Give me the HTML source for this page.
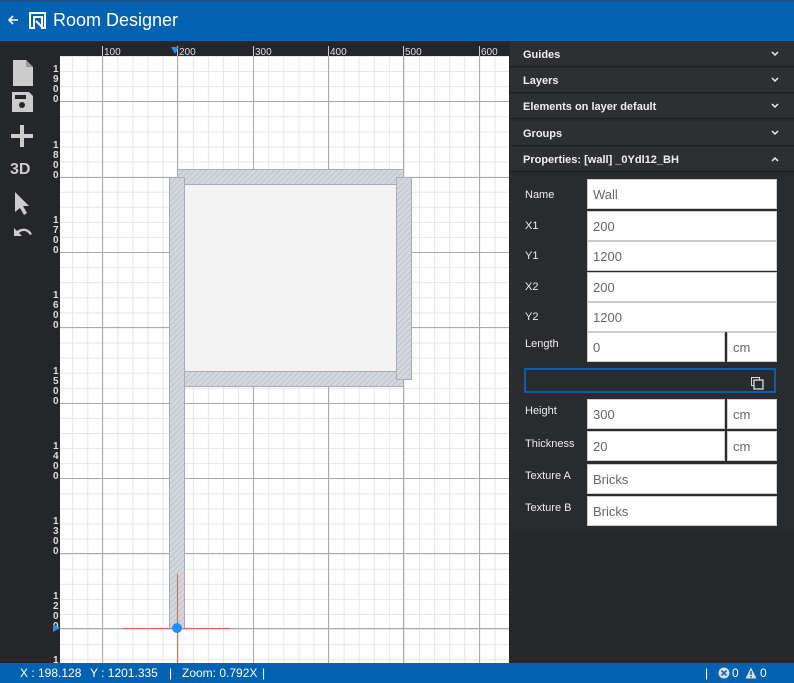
<!DOCTYPE html>
<html><head><meta charset="utf-8"><style>
*{margin:0;padding:0;box-sizing:border-box}
body{width:794px;height:683px;overflow:hidden;background:#252629;font-family:"Liberation Sans",sans-serif;position:relative}
.hdr{position:absolute;left:0;top:0;width:794px;height:41px;background:#0062b1;border-top:2px solid #1a4f86;color:#fff}
.hdr .t{position:absolute;left:53px;top:8px;font-size:18px}
.panel{position:absolute;left:510px;top:41px;width:284px;height:622px;background:#28292c}
.sec{position:absolute;left:0;width:284px;height:25px;background:#2e2f33;border-bottom:1px solid #1d1e20;color:#f0f0f0;font-size:11px;font-weight:bold;padding:7px 0 0 13px}
.sec svg{position:absolute;right:15px;top:9px}
.body{position:absolute;left:0;top:132px;width:284px;height:360px;background:#2a2b2e}
.lbl{position:absolute;left:525px;color:#eee;font-size:11px}
.in{position:absolute;background:#fff;border:1px solid #ccc;color:#666;font-size:13px;padding:7px 0 0 5px;height:30px}
.status{position:absolute;left:0;top:663px;width:794px;height:20px;background:#0062b1;color:#fff;font-size:12px}
.status span{position:absolute;top:3px}
</style></head><body>
<div class="hdr">
<svg style="position:absolute;left:7px;top:12px" width="12" height="12" viewBox="0 0 12 12"><path d="M11 6H2M6 2L2 6l4 4" stroke="#fff" stroke-width="1.6" fill="none"/></svg>
<svg style="position:absolute;left:28px;top:9px" width="19" height="19" viewBox="0 0 19 19"><path d="M2 17V2h15v15h-3V6H6v11z" fill="none" stroke="#fff" stroke-width="2"/><path d="M8 10l7 7" stroke="#fff" stroke-width="2"/></svg>
<div class="t">Room Designer</div>
</div>
<svg style="position:absolute;left:0;top:41px" width="510" height="622">
<rect width="510" height="622" fill="#252629"/>
<g fill="#ccc">
<path d="M13 19h13l7 7v19H13z"/><path d="M26 19v7h7" fill="#999"/>
<path d="M12 51h17l4 4v16H12z"/><circle cx="22" cy="64" r="3" fill="#252629"/><rect x="15" y="54" width="11" height="4" fill="#252629"/>
<rect x="11" y="93" width="22" height="4"/><rect x="20" y="84" width="4" height="22"/>
<text x="10" y="133" font-size="16" font-weight="bold" font-family="Liberation Sans">3D</text>
<path d="M15 151l0 20 5-4 4 7 3-2-4-7 6 0z"/>
<path d="M14 187v8h8l-3-3c3-3 8-3 11 2l2-1c-3-6-10-7-15-3z"/>
</g>
<g fill="#ddd" font-size="10" font-family="Liberation Sans">
<text x="104" y="14">100</text><text x="179" y="14">200</text><text x="255" y="14">300</text><text x="330" y="14">400</text><text x="405" y="14">500</text><text x="481" y="14">600</text>
</g>
<g stroke="#ccc"><path d="M102.5 5v10M177.5 5v10M253.5 5v10M328.5 5v10M403.5 5v10M479.5 5v10"/></g>
<path d="M171 6h8l-4 7z" fill="#1e90ff"/>
<g fill="#ddd" font-size="10" font-weight="bold" font-family="Liberation Sans">
<text x="53" y="31">1</text><text x="53" y="41">9</text><text x="53" y="51">0</text><text x="53" y="61">0</text>
<text x="53" y="107">1</text><text x="53" y="117">8</text><text x="53" y="127">0</text><text x="53" y="137">0</text>
<text x="53" y="182">1</text><text x="53" y="192">7</text><text x="53" y="202">0</text><text x="53" y="212">0</text>
<text x="53" y="257">1</text><text x="53" y="267">6</text><text x="53" y="277">0</text><text x="53" y="287">0</text>
<text x="53" y="333">1</text><text x="53" y="343">5</text><text x="53" y="353">0</text><text x="53" y="363">0</text>
<text x="53" y="408">1</text><text x="53" y="418">4</text><text x="53" y="428">0</text><text x="53" y="438">0</text>
<text x="53" y="483">1</text><text x="53" y="493">3</text><text x="53" y="503">0</text><text x="53" y="513">0</text>
<text x="53" y="558">1</text><text x="53" y="568">2</text><text x="53" y="578">0</text><text x="53" y="588">0</text>
<text x="53" y="622">1</text>
</g>
<path d="M53 583l7 4-7 4z" fill="#1e90ff"/>
</svg>
<svg style="position:absolute;left:60px;top:56px" width="449" height="607">
<defs>
<pattern id="mi" width="15.08" height="15.08" patternUnits="userSpaceOnUse" x="-2.9" y="0"><path d="M0.5 0V15.08M0 0.5H15.08" stroke="#e6e6e6" fill="none"/></pattern>
<pattern id="h" width="4" height="4" patternUnits="userSpaceOnUse" patternTransform="rotate(45)"><rect width="4" height="4" fill="#d4d8dc"/><path d="M0 0V4" stroke="#b8bec4" stroke-width="1.5"/></pattern>
</defs>
<rect width="449" height="607" fill="#fff"/>
<rect width="449" height="607" fill="url(#mi)"/>
<g stroke="#aaa"><path d="M42.5 0V607M117.5 0V607M193.5 0V607M268.5 0V607M343.5 0V607M419.5 0V607M0 45.5H449M0 121.5H449M0 196.5H449M0 271.5H449M0 347.5H449M0 422.5H449M0 497.5H449M0 572.5H449"/></g>
<rect x="125" y="129" width="211" height="186" fill="#f3f3f3"/>
<g fill="url(#h)" stroke="#aab" stroke-width="1">
<rect x="117.5" y="113.5" width="226" height="15"/>
<rect x="117.5" y="315.5" width="226" height="15"/>
<rect x="336.5" y="121.5" width="15" height="202"/>
<rect x="109.5" y="121.5" width="15" height="451"/>
</g>
<path d="M117.5 518V607M63 572.5H170" stroke="#e06a6a" stroke-width="1.2"/>
<circle cx="117" cy="572" r="5" fill="#1e8fff"/>
</svg>
<div class="panel">
<div class="sec" style="top:1px">Guides<svg width="8" height="6"><path d="M1 1l3 3 3-3" stroke="#eee" stroke-width="1.5" fill="none"/></svg></div>
<div class="sec" style="top:27px">Layers<svg width="8" height="6"><path d="M1 1l3 3 3-3" stroke="#eee" stroke-width="1.5" fill="none"/></svg></div>
<div class="sec" style="top:53px">Elements on layer default<svg width="8" height="6"><path d="M1 1l3 3 3-3" stroke="#eee" stroke-width="1.5" fill="none"/></svg></div>
<div class="sec" style="top:80px">Groups<svg width="8" height="6"><path d="M1 1l3 3 3-3" stroke="#eee" stroke-width="1.5" fill="none"/></svg></div>
<div class="sec" style="top:106px">Properties: [wall] _0Ydl12_BH<svg width="8" height="6"><path d="M1 5l3-3 3 3" stroke="#eee" stroke-width="1.5" fill="none"/></svg></div>
<div class="body"></div>
</div>
<div class="lbl" style="top:189px">Name</div><div class="in" style="left:587px;top:179px;width:190px">Wall</div>
<div class="lbl" style="top:220px">X1</div><div class="in" style="left:587px;top:211px;width:190px">200</div>
<div class="lbl" style="top:250px">Y1</div><div class="in" style="left:587px;top:241px;width:190px">1200</div>
<div class="lbl" style="top:281px">X2</div><div class="in" style="left:587px;top:272px;width:190px">200</div>
<div class="lbl" style="top:311px">Y2</div><div class="in" style="left:587px;top:302px;width:190px">1200</div>
<div class="lbl" style="top:338px">Length</div><div class="in" style="left:587px;top:332px;width:138px">0</div><div class="in" style="left:727px;top:332px;width:50px">cm</div>
<div style="position:absolute;left:524px;top:368px;width:252px;height:25px;border:2px solid #0a5db0"></div>
<svg style="position:absolute;left:751px;top:377px" width="13" height="13"><rect x="0.5" y="0.5" width="8" height="8" fill="none" stroke="#ddd"/><rect x="3" y="3" width="9" height="9" fill="#2a2b2e" stroke="#ddd" stroke-width="1.3"/></svg>
<div class="lbl" style="top:405px">Height</div><div class="in" style="left:587px;top:399px;width:138px">300</div><div class="in" style="left:727px;top:399px;width:50px">cm</div>
<div class="lbl" style="top:438px">Thickness</div><div class="in" style="left:587px;top:431px;width:138px">20</div><div class="in" style="left:727px;top:431px;width:50px">cm</div>
<div class="lbl" style="top:470px">Texture A</div><div class="in" style="left:587px;top:464px;width:190px">Bricks</div>
<div class="lbl" style="top:502px">Texture B</div><div class="in" style="left:587px;top:496px;width:190px">Bricks</div>
<div class="status">
<span style="left:20px">X : 198.128</span><span style="left:90px">Y : 1201.335</span>
<span style="left:169px">|</span><span style="left:182px">Zoom: 0.792X</span><span style="left:262px">|</span>
<span style="left:705px">|</span>
<svg style="position:absolute;left:718px;top:4px" width="12" height="12"><circle cx="6" cy="6" r="5.5" fill="#ddd"/><path d="M3.5 3.5l5 5M8.5 3.5l-5 5" stroke="#0062b1" stroke-width="1.5"/></svg>
<span style="left:732px">0</span>
<svg style="position:absolute;left:745px;top:4px" width="12" height="12"><path d="M6 0.5L11.5 11.5H0.5z" fill="#ddd"/><path d="M6 4v4M6 9v1.5" stroke="#0062b1" stroke-width="1.5"/></svg>
<span style="left:760px">0</span>
</div>
</body></html>
